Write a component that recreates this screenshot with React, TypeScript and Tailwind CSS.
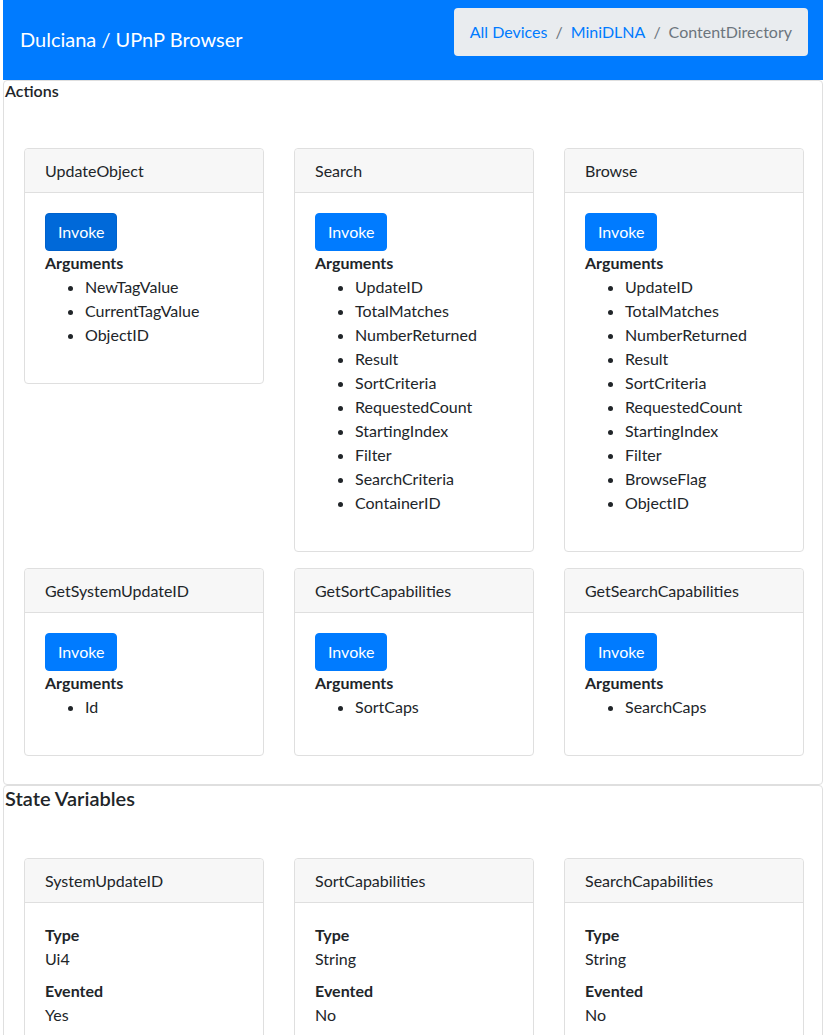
import React from "react";

const actions = [
  { name: "UpdateObject", args: ["NewTagValue", "CurrentTagValue", "ObjectID"], active: true },
  {
    name: "Search",
    args: ["UpdateID", "TotalMatches", "NumberReturned", "Result", "SortCriteria", "RequestedCount", "StartingIndex", "Filter", "SearchCriteria", "ContainerID"],
  },
  {
    name: "Browse",
    args: ["UpdateID", "TotalMatches", "NumberReturned", "Result", "SortCriteria", "RequestedCount", "StartingIndex", "Filter", "BrowseFlag", "ObjectID"],
  },
  { name: "GetSystemUpdateID", args: ["Id"] },
  { name: "GetSortCapabilities", args: ["SortCaps"] },
  { name: "GetSearchCapabilities", args: ["SearchCaps"] },
];

const stateVars = [
  { name: "SystemUpdateID", type: "Ui4", evented: "Yes" },
  { name: "SortCapabilities", type: "String", evented: "No" },
  { name: "SearchCapabilities", type: "String", evented: "No" },
];

function CardHeader({ title }: { title: string }) {
  return (
    <div className="bg-[#f7f7f7] border-b border-[#dfdfdf] px-5 pt-[10px] pb-[9px] leading-6 rounded-t-[4px]">
      {title}
    </div>
  );
}

export default function App() {
  return (
    <div
      className="ml-[3px] w-[820px] text-[16px] text-[#212529] bg-white"
      style={{ fontFamily: "Lato, 'Open Sans', sans-serif" }}
    >
      {/* Navbar */}
      <nav className="bg-[#007bff] flex items-center justify-between px-4 pt-2 pb-2">
        <span className="text-white text-[20px] leading-[30px] pl-[1px] pb-[2px]">
          Dulciana / UPnP Browser
        </span>
        <ol className="bg-[#e9ecef] rounded-[4px] px-4 py-3 leading-6 mb-4 flex mr-[-1px]">
          <li className="text-[#007bff]">All Devices</li>
          <li className="text-[#6c757d] px-2">/</li>
          <li className="text-[#007bff]">MiniDLNA</li>
          <li className="text-[#6c757d] px-2">/</li>
          <li className="text-[#6c757d]">ContentDirectory</li>
        </ol>
      </nav>

      {/* Actions */}
      <section className="border border-[#dfdfdf] rounded-[4px]">
        <h6 className="font-semibold text-[16px] leading-[19px] pl-[1px]">Actions</h6>
        <div className="grid grid-cols-[240px_240px_240px] gap-x-[30px] gap-y-4 pl-5 pt-[48px] pb-[28px] items-start">
          {actions.map((a) => (
            <div key={a.name} className="border border-[#dfdfdf] rounded-[4px]">
              <CardHeader title={a.name} />
              <div className="p-5">
                <button
                  className={
                    a.active
                      ? "bg-[#0069d9] border border-[#0062cc] text-white rounded-[4px] px-3 py-[6px] leading-6"
                      : "bg-[#007bff] border border-[#007bff] text-white rounded-[4px] px-3 py-[6px] leading-6"
                  }
                >
                  Invoke
                </button>
                <div className="font-bold leading-6">Arguments</div>
                <ul className="list-disc pl-10 mb-4 leading-6">
                  {a.args.map((x) => (
                    <li key={x}>{x}</li>
                  ))}
                </ul>
              </div>
            </div>
          ))}
        </div>
      </section>

      {/* State Variables */}
      <section className="border border-[#dfdfdf] rounded-[4px]">
        <h5 className="font-semibold text-[20px] leading-6 pl-[1px]">State Variables</h5>
        <div className="grid grid-cols-[240px_240px_240px] gap-x-[30px] gap-y-4 pl-5 pt-[48px] pb-[30px] items-start">
          {stateVars.map((s) => (
            <div key={s.name} className="border border-[#dfdfdf] rounded-[4px]">
              <CardHeader title={s.name} />
              <dl className="p-5 leading-6">
                <dt className="font-bold">Type</dt>
                <dd className="mb-2">{s.type}</dd>
                <dt className="font-bold">Evented</dt>
                <dd className="mb-2">{s.evented}</dd>
              </dl>
            </div>
          ))}
        </div>
      </section>
    </div>
  );
}
